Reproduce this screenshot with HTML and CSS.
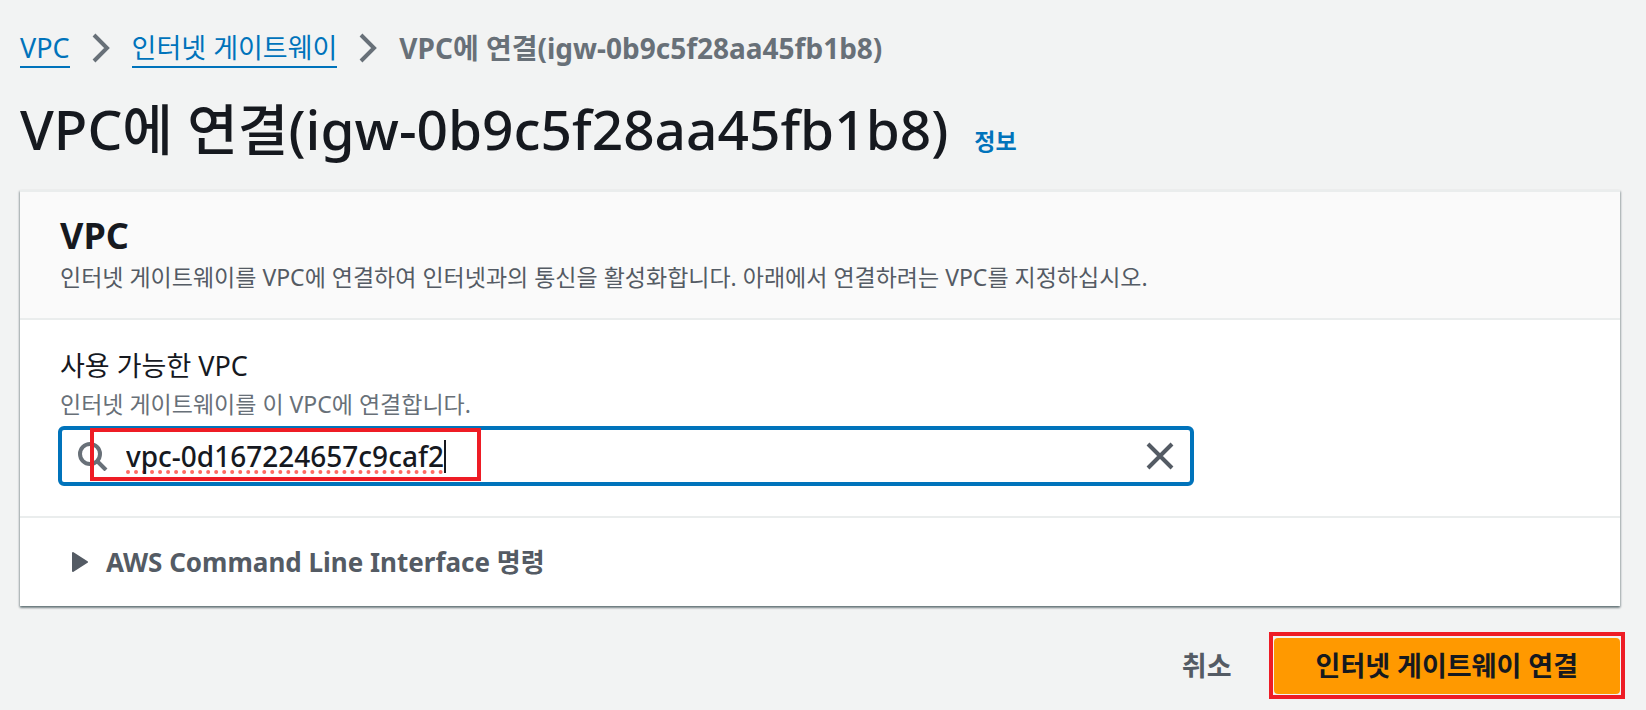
FILE: index.html
```html
<!DOCTYPE html>
<html lang="ko">
<head>
    <meta charset="UTF-8">
    <meta name="viewport" content="width=device-width, initial-scale=1.0">
    <title>VPC에 연결</title>
    <link rel="stylesheet" href="styles.css">
</head>
<body>
    <nav class="breadcrumb" aria-label="Breadcrumb">
        <a class="breadcrumb-link" href="#vpc">VPC</a>
        <svg class="chevron" viewBox="0 0 18 30" aria-hidden="true"><path d="M2 2l13 13L2 28"/></svg>
        <a class="breadcrumb-link" href="#igw">인터넷 게이트웨이</a>
        <svg class="chevron" viewBox="0 0 18 30" aria-hidden="true"><path d="M2 2l13 13L2 28"/></svg>
        <span class="breadcrumb-current">VPC에 연결(igw-0b9c5f28aa45fb1b8)</span>
    </nav>

    <header class="page-header">
        <h1 class="page-title">VPC에 연결(igw-0b9c5f28aa45fb1b8)</h1>
        <a class="info-link" href="#info">정보</a>
    </header>

    <form>
        <section class="card">
            <div class="card-header">
                <h2 class="card-title">VPC</h2>
                <p class="card-text">인터넷 게이트웨이를 VPC에 연결하여 인터넷과의 통신을 활성화합니다. 아래에서 연결하려는 VPC를 지정하십시오.</p>
            </div>
            <div class="card-content">
                <label class="field-label" for="vpcInput">사용 가능한 VPC</label>
                <p class="field-hint" id="vpcHint">인터넷 게이트웨이를 이 VPC에 연결합니다.</p>
                <div class="search-box">
                    <svg class="search-icon" viewBox="0 0 30 30" aria-hidden="true">
                        <circle cx="12" cy="13" r="10"/>
                        <path d="M19 20l9 9"/>
                    </svg>
                    <input class="search-input" id="vpcInput" type="text" value="vpc-0d167224657c9caf2" aria-describedby="vpcHint" spellcheck="false" autocomplete="off">
                    <button class="clear-button" type="button" aria-label="Clear">
                        <svg class="clear-icon" viewBox="0 0 28 28" aria-hidden="true"><path d="M2 2l24 24M26 2L2 26"/></svg>
                    </button>
                    <span class="caret"></span>
                    <span class="highlight highlight-input"></span>
                </div>
            </div>
            <div class="card-footer">
                <button class="expand-button" type="button" aria-expanded="false">
                    <svg class="expand-icon" viewBox="0 0 16 20" aria-hidden="true"><path d="M1 1l14 9L1 19z"/></svg>
                    AWS Command Line Interface 명령
                </button>
            </div>
        </section>

        <div class="actions">
            <button class="cancel-button" type="button">취소</button>
            <div class="primary-wrap">
                <button class="primary-button" type="submit">인터넷 게이트웨이 연결</button>
                <span class="highlight highlight-button"></span>
            </div>
        </div>
    </form>
</body>
</html>
```
FILE: styles.css
```css
* {
    padding: 0;
    margin: 0;
    box-sizing: border-box;
}
body {
    font-family: "Noto Sans", "Noto Sans CJK KR", sans-serif;
    font-size: 27px;
    line-height: 40px;
    padding: 28px 26px 10px 20px;
    color: #16191f;
    background-color: #f2f3f3;
}
button, input {
    font: inherit;
    color: inherit;
    background: none;
    border: none;
}
button {
    cursor: pointer;
}
.breadcrumb {
    display: flex;
    align-items: center;
    gap: 22px;
    height: 40px;
}
.breadcrumb-link {
    color: #0073bb;
    text-decoration: none;
    line-height: 37px;
    border-bottom: 2px solid #0073bb;
}
.breadcrumb-current {
    font-size: 28px;
    font-weight: bold;
    line-height: 38px;
    color: #687078;
}
.chevron {
    width: 18px;
    height: 30px;
    fill: none;
    stroke: #687078;
    stroke-width: 4;
}
.page-header {
    display: flex;
    align-items: baseline;
    gap: 26px;
    padding: 21px 0;
}
.page-title {
    font-size: 55px;
    font-weight: 500;
    line-height: 80px;
}
.info-link {
    font-size: 23px;
    font-weight: bold;
    line-height: 32px;
    color: #0073bb;
    text-decoration: none;
}
.card {
    background-color: #fff;
    border-top: 2px solid #eaeded;
    box-shadow: 0 2px 2px rgba(0, 28, 36, 0.4), 1px 1px 2px rgba(0, 28, 36, 0.2), -1px 1px 2px rgba(0, 28, 36, 0.2);
}
.card-header {
    padding: 22px 40px;
    background-color: #fafafa;
    border-bottom: 2px solid #eaeded;
}
.card-title {
    font-size: 36px;
    line-height: 44px;
}
.card-text {
    font-size: 23px;
    line-height: 38px;
    color: #545b64;
}
.card-content {
    padding: 26px 40px 30px;
}
.field-label {
    display: block;
}
.field-hint {
    font-size: 23px;
    line-height: 36px;
    color: #687078;
}
.search-box {
    position: relative;
    display: flex;
    align-items: center;
    gap: 18px;
    width: calc(75% - 4px);
    height: 60px;
    margin: 4px 0 0 -2px;
    padding: 0 16px;
    border: 4px solid #0073bb;
    border-radius: 6px;
}
.search-icon {
    width: 30px;
    height: 30px;
    fill: none;
    stroke: #687078;
    stroke-width: 4;
}
.search-input {
    flex: 1;
    height: 48px;
    font-size: 28px;
    font-weight: 500;
    outline: none;
    text-decoration: underline dotted #ff6b63 4px;
    text-underline-offset: 3px;
    text-decoration-skip-ink: none;
}
.clear-button {
    display: flex;
}
.clear-icon {
    width: 28px;
    height: 28px;
    fill: none;
    stroke: #545b64;
    stroke-width: 4;
}
.caret {
    position: absolute;
    top: 10px;
    left: 382px;
    width: 2px;
    height: 33px;
    background-color: #16191f;
}
.highlight {
    position: absolute;
    border: 4px solid #ee1c25;
    pointer-events: none;
}
.highlight-input {
    top: -2px;
    left: 28px;
    width: 391px;
    height: 53px;
}
.highlight-button {
    inset: -6px -5px -5px;
}
.card-footer {
    padding: 24px 52px;
    border-top: 2px solid #eaeded;
}
.expand-button {
    display: flex;
    align-items: center;
    gap: 18px;
    font-size: 26px;
    font-weight: bold;
    color: #545b64;
}
.expand-icon {
    width: 16px;
    height: 20px;
    fill: #545b64;
    stroke: #545b64;
    stroke-width: 2;
    stroke-linejoin: round;
}
.actions {
    display: flex;
    justify-content: flex-end;
    align-items: center;
    gap: 42px;
    padding-top: 32px;
}
.cancel-button {
    font-weight: bold;
    color: #545b64;
}
.primary-wrap {
    position: relative;
}
.primary-button {
    display: block;
    height: 56px;
    padding: 0 42px;
    font-weight: bold;
    background-color: #ff9900;
    border-radius: 4px;
}
```
